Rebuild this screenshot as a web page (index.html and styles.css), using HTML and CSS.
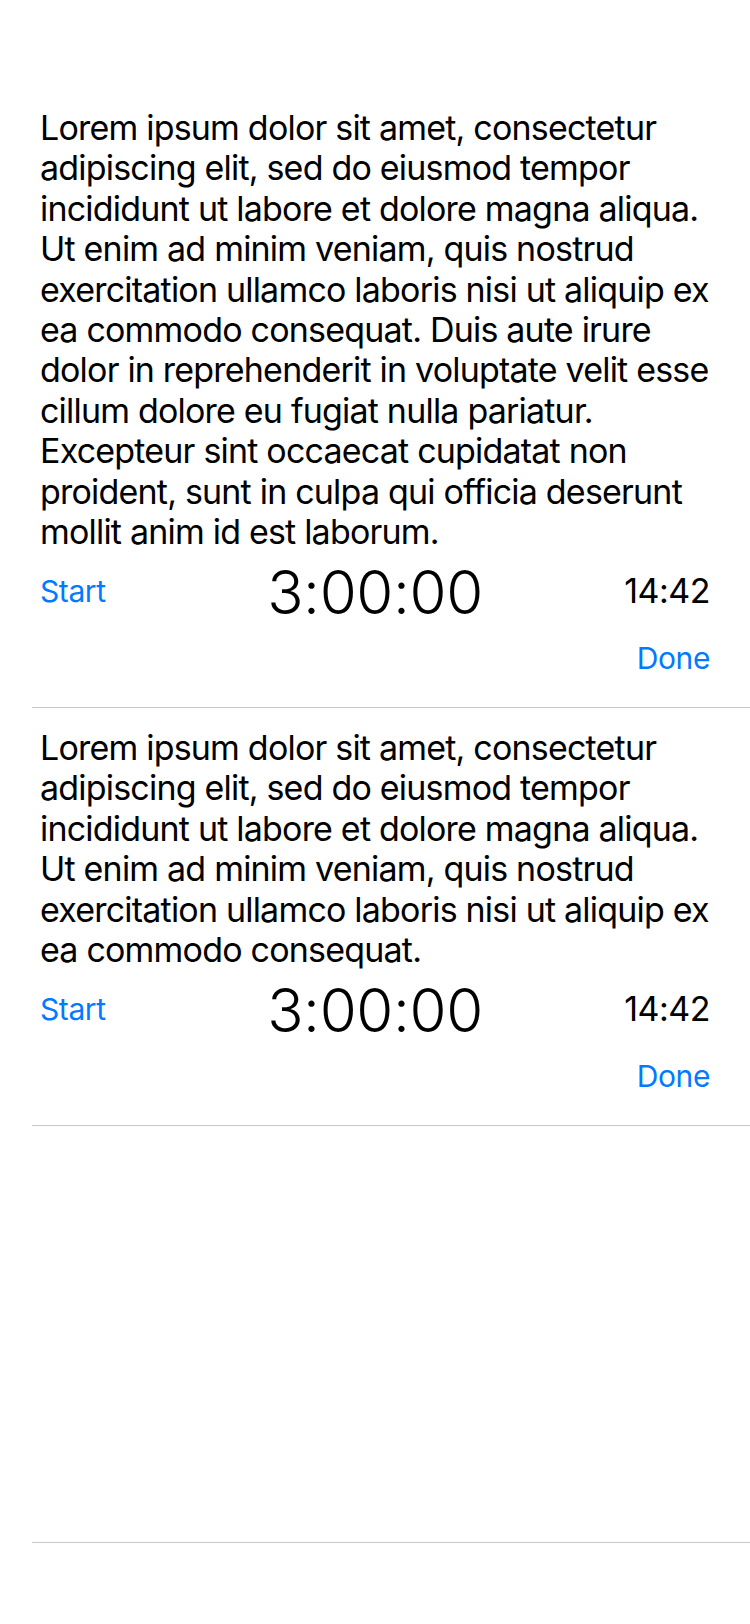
FILE: index.html
```html
<!DOCTYPE html>
<html lang="en">
<head>
<meta charset="utf-8">
<title>Timers</title>
<link rel="stylesheet" href="styles.css">
</head>
<body>
<div class="list">
  <div class="cell">
    <p class="body-text">Lorem ipsum dolor sit amet, consectetur<br>adipiscing elit, sed do eiusmod tempor<br>incididunt ut labore et dolore magna aliqua.<br>Ut enim ad minim veniam, quis nostrud<br>exercitation ullamco laboris nisi ut aliquip ex<br>ea commodo consequat. Duis aute irure<br>dolor in reprehenderit in voluptate velit esse<br>cillum dolore eu fugiat nulla pariatur.<br>Excepteur sint occaecat cupidatat non<br>proident, sunt in culpa qui officia deserunt<br>mollit anim id est laborum.</p>
    <div class="timer-row">
      <span class="link start">Start</span>
      <span class="timer">3:00:00</span>
      <span class="clock">14:42</span>
    </div>
    <div class="done-row"><span class="link">Done</span></div>
  </div>
  <div class="cell">
    <p class="body-text">Lorem ipsum dolor sit amet, consectetur<br>adipiscing elit, sed do eiusmod tempor<br>incididunt ut labore et dolore magna aliqua.<br>Ut enim ad minim veniam, quis nostrud<br>exercitation ullamco laboris nisi ut aliquip ex<br>ea commodo consequat.</p>
    <div class="timer-row">
      <span class="link start">Start</span>
      <span class="timer">3:00:00</span>
      <span class="clock">14:42</span>
    </div>
    <div class="done-row"><span class="link">Done</span></div>
  </div>
  <div class="cell empty"></div>
</div>
</body>
</html>
```
FILE: styles.css
```css
html, body {
  margin: 0;
  padding: 0;
  background: #ffffff;
}
body {
  width: 750px;
  font-family: Inter, "Noto Sans", sans-serif;
  color: #000000;
}
.list {
  padding-top: 88px;
}
.cell {
  margin-left: 32px;
  padding: 20px 40px 23.5px 8px;
  border-bottom: 1px solid #c8c7cc;
  display: flex;
  flex-direction: column;
}
.cell.empty {
  height: 416px;
  padding: 0;
}
.body-text {
  margin: 0;
  font-size: 34px;
  line-height: 40.4px;
  letter-spacing: -0.8px;
  white-space: nowrap;
}
.timer-row {
  display: grid;
  grid-template-columns: 1fr auto 1fr;
  align-items: center;
  height: 80px;
}
.link {
  color: #007aff;
  font-size: 30px;
  letter-spacing: -0.4px;
}
.start {
  justify-self: start;
  margin-bottom: 3px;
}
.timer {
  font-size: 60px;
  letter-spacing: -0.4px;
  font-weight: 300;
}
.clock {
  justify-self: end;
  font-size: 34px;
  letter-spacing: -0.5px;
  margin-bottom: 3px;
}
.done-row {
  display: flex;
  justify-content: flex-end;
  align-items: center;
  height: 51px;
}
```
